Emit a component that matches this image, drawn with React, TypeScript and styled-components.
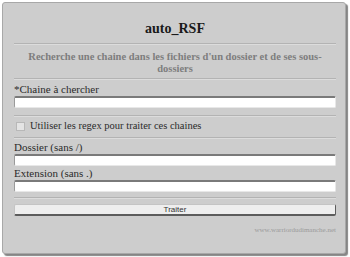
import React, { useState } from "react";
import styled, { createGlobalStyle } from "styled-components";

const GlobalStyle = createGlobalStyle`
  html, body {
    margin: 0;
    padding: 0;
    background: #ffffff;
  }
  body {
    font-family: "Liberation Serif", "DejaVu Serif", serif;
  }
`;

const App: React.FC = () => {
  const [query, setQuery] = useState("");
  const [regex, setRegex] = useState(false);
  const [folder, setFolder] = useState("");
  const [ext, setExt] = useState("");

  return (
    <>
      <GlobalStyle />
      <Page>
        <Panel>
          <Title>auto_RSF</Title>
          <Rule $gap={5} />
          <Subtitle>
            Recherche une chaine dans les fichiers d'un dossier et de ses
            sous-dossiers
          </Subtitle>
          <Rule $gap={3} />
          <Field $gap={3}>
            <Label>*Chaine à chercher</Label>
            <Input value={query} onChange={(e) => setQuery(e.target.value)} />
          </Field>
          <Rule $gap={7} />
          <CheckRow>
            <Check
              type="checkbox"
              checked={regex}
              onChange={(e) => setRegex(e.target.checked)}
            />
            Utiliser les regex pour traiter ces chaines
          </CheckRow>
          <Rule $gap={4} />
          <Field $gap={2}>
            <Label>Dossier (sans /)</Label>
            <Input value={folder} onChange={(e) => setFolder(e.target.value)} />
          </Field>
          <Field $gap={1}>
            <Label>Extension (sans .)</Label>
            <Input value={ext} onChange={(e) => setExt(e.target.value)} />
          </Field>
          <Rule $gap={5} />
          <Button>Traiter</Button>
          <Credit>www.warriordudimanche.net</Credit>
        </Panel>
      </Page>
    </>
  );
};

export default App;

// Styled Components
const Page = styled.div`
  padding: 2px 4px 3px 2px;
  width: 350px;
  height: 257px;
  box-sizing: border-box;
`;

const Panel = styled.div`
  height: 252px;
  box-sizing: border-box;
  background: #cdcdcd;
  border: 1px solid #a8a8a8;
  border-radius: 3px;
  box-shadow: 2px 2px 1px #858585;
  padding: 17px 9px 0 11px;
  display: flex;
  flex-direction: column;
`;

const Title = styled.h1`
  margin: 0;
  font-size: 14px;
  font-weight: bold;
  text-align: center;
  color: #1a1a1a;
  line-height: 18px;
`;

const Rule = styled.div<{ $gap: number }>`
  flex: none;
  height: 0;
  border-top: 1px solid #b3b3b3;
  border-bottom: 1px solid #dcdcdc;
  margin-top: ${(p) => p.$gap}px;
`;

const Subtitle = styled.h2`
  margin: 6px 0 0;
  font-size: 10.5px;
  font-weight: bold;
  color: #7d7d7d;
  text-align: center;
  line-height: 12px;
  padding: 0 12px;
`;

const Field = styled.div<{ $gap: number }>`
  display: flex;
  flex-direction: column;
  margin-top: ${(p) => p.$gap}px;
`;

const Label = styled.label`
  font-size: 11px;
  color: #2b2b2b;
  line-height: 13px;
`;

const Input = styled.input`
  box-sizing: border-box;
  width: 100%;
  height: 12px;
  margin: 0;
  padding: 0 3px;
  border: none;
  border-top: 2px solid #7a7a7a;
  border-left: 1px solid #9a9a9a;
  border-right: 1px solid #e8e8e8;
  border-bottom: 1px solid #e8e8e8;
  border-radius: 2px;
  background: #ffffff;
  font-size: 9px;
  outline: none;
`;

const CheckRow = styled.label`
  display: flex;
  align-items: center;
  gap: 5px;
  margin-top: 2px;
  font-size: 10.5px;
  color: #2b2b2b;
  line-height: 14px;
  padding-left: 2px;
`;

const Check = styled.input`
  margin: 0;
  width: 9px;
  height: 9px;
  appearance: none;
  border: 1px solid #b8b8b8;
  background: #e4e4e4;
`;

const Button = styled.button`
  box-sizing: border-box;
  width: 100%;
  height: 12px;
  margin-top: 5px;
  padding: 0;
  border: 1px solid #c4c4c4;
  border-right: 1px solid #5c5c5c;
  border-bottom: 2px solid #5c5c5c;
  border-radius: 2px;
  background: #eeeeee;
  font-family: "Liberation Sans", Arial, sans-serif;
  font-size: 8px;
  line-height: 9px;
  color: #333333;
  cursor: pointer;
`;

const Credit = styled.div`
  margin-top: 9px;
  text-align: right;
  font-size: 7px;
  line-height: 10px;
  color: #9a9a9a;
`;
